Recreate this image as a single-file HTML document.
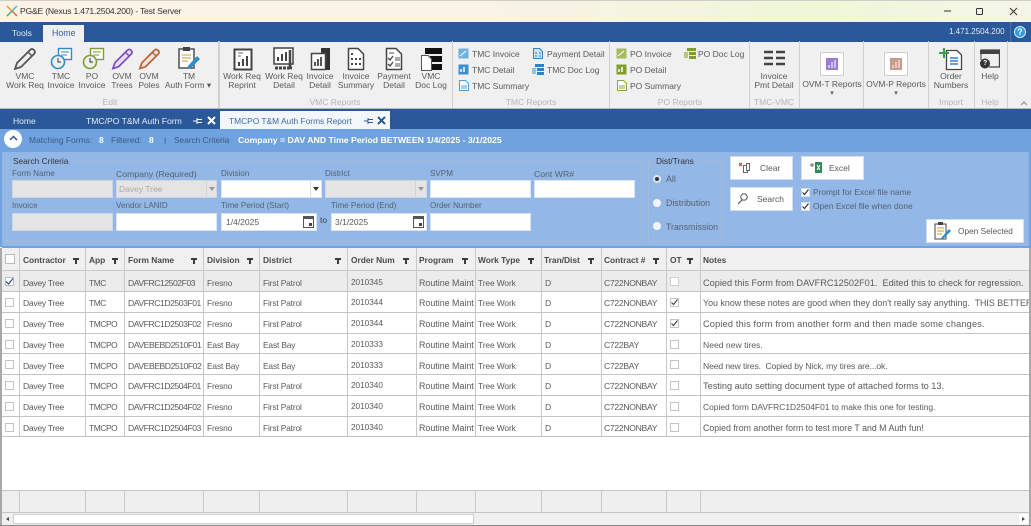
<!DOCTYPE html>
<html><head><meta charset="utf-8"><title>PG&amp;E</title>
<style>
html,body{margin:0;padding:0;width:1031px;height:526px;overflow:hidden;background:#fff}
#w{position:absolute;left:0;top:0;width:1031px;height:526px;overflow:hidden;font-family:"Liberation Sans",sans-serif;font-size:8.5px;color:#5a5a5a;filter:blur(.35px)}
#w div,#w span,#w svg{position:absolute}
.t{white-space:pre;line-height:12px;transform:translateY(-6px)}
.c{white-space:pre;line-height:12px;transform:translate(-50%,-6px);text-align:center}
.s{background:#d0d0d0;width:2px;top:41px;height:67px}
.g{color:#b4b4b4}
.lb{color:#55606e;font-size:8.1px}
.in{background:#fff;border:1px solid #dbe4f0;box-sizing:border-box;height:18px}
.dis{background:#e4e4e4;border-color:#cfd6df}
.btn{background:#fff;border:1px solid #d5deea;box-sizing:border-box}
.r{left:0;width:1031px;height:21px;background:#fff;border-bottom:1px solid #c4c4c4;box-sizing:border-box}
.cb{background:#fff;border:1px solid #c4c4c4;width:9px;height:9px;box-sizing:border-box}
.h{font-weight:bold;color:#4a4a4a;font-size:8.4px}
.f{width:6px;height:2px;background:#3c3c3c}
.f::after{content:"";position:absolute;left:2px;top:1px;width:2px;height:5px;background:#3c3c3c}
.vl{width:1px;top:248px;height:189px;background:#c8c8c8}
.vf{width:1px;top:490px;height:23px;background:#c8c8c8}
.t:not(.h)[style^="left:23px"]{font-size:8.6px;letter-spacing:-.3px}
.t:not(.h)[style^="left:89px"]{font-size:8.4px;letter-spacing:-.4px}
.t:not(.h)[style^="left:128px"]{font-size:8.6px;letter-spacing:-.45px}
.t:not(.h)[style^="left:207px"]{font-size:8.4px;letter-spacing:-.15px}
.t:not(.h)[style^="left:263px"]{font-size:8.4px;letter-spacing:-.15px}
.t:not(.h)[style^="left:351px"]{font-size:8.2px}
.t:not(.h)[style^="left:419px"]{font-size:8.9px}
.t:not(.h)[style^="left:478px"]{font-size:8.4px;letter-spacing:-.1px}
.t:not(.h)[style^="left:604px"]{font-size:8.6px;letter-spacing:-.3px}
</style></head><body><div id="w">

<!-- title bar -->
<div style="left:0;top:0;width:1031px;height:22px;background:linear-gradient(90deg,#fbf3e6 0%,#f7f3e4 55%,#eff7d8 80%,#f4f5e9 100%)"></div>
<div style="left:0;top:0;width:1031px;height:1px;background:#cfcfc8"></div>
<svg style="left:6px;top:5px" width="12" height="12" viewBox="0 0 12 12"><path d="M1 1L11 11" stroke="#e8604c" stroke-width="1.4"/><path d="M11 1L1 11" stroke="#3fb4d8" stroke-width="1.4"/><path d="M1 1L6 6" stroke="#f0a830" stroke-width="1.4"/><path d="M6 6L1 11" stroke="#58b858" stroke-width="1.4"/></svg>
<span class="t" style="left:20px;top:11px;font-size:8.6px;letter-spacing:-.2px;color:#333">PG&amp;E (Nexus 1.471.2504.200) - Test Server</span>
<svg style="left:940px;top:4px" width="91" height="15" viewBox="0 0 91 15"><path d="M4 7H11" stroke="#333"/><rect x="36.500" y="4.500" width="6" height="6" rx="1" fill="none" stroke="#333"/><path d="M70 4L77 11M77 4L70 11" stroke="#333"/></svg>

<!-- blue bar -->
<div style="left:0;top:22px;width:1031px;height:20px;background:#2a5899"></div>
<span class="t" style="left:12px;top:33px;color:#dfe8f4;font-size:8.5px">Tools</span>
<div style="left:43px;top:25px;width:41px;height:17px;background:#f0f0f0"></div>
<span class="t" style="left:52px;top:33px;color:#2f5f9f;font-size:8.8px">Home</span>
<span class="t" style="left:949px;top:32px;color:#e4ebf5;font-size:8px">1.471.2504.200</span>
<div style="left:1010px;top:22px;width:1px;height:20px;background:#4d75ad"></div>
<div style="left:1014px;top:26px;width:12px;height:12px;border-radius:50%;background:#2c9be2;border:1px solid #d7ecfa;box-sizing:border-box;color:#fff;font-weight:bold;font-size:9px;line-height:10px;text-align:center">?</div>

<!-- ribbon -->
<div style="left:0;top:42px;width:1031px;height:66px;background:#f0f0f0"></div>
<div style="left:0;top:108px;width:1031px;height:1px;background:#b9b9b9"></div>
<div class="s" style="left:218px"></div><div class="s" style="left:452px;width:1px"></div><div class="s" style="left:609px;width:1px"></div><div class="s" style="left:749px;width:1px"></div><div class="s" style="left:799px;width:1px"></div><div class="s" style="left:863px;width:1px"></div><div class="s" style="left:928px;width:1px"></div><div class="s" style="left:974px;width:1px"></div><div class="s" style="left:1007px;width:1px"></div>

<!-- pencil icons -->
<svg style="left:13px;top:47px" width="24" height="23" viewBox="0 0 24 23"><path d="M4 16L17 3Q19 1 21 3T21 7L8 20L2 22Z" fill="none" stroke="#555" stroke-width="1.8"/><path d="M15 5L19 9" stroke="#555" stroke-width="1.500"/></svg>
<svg style="left:50px;top:47px" width="23" height="24" viewBox="0 0 23 24"><rect x="8.500" y="1.500" width="13" height="11" fill="#fff" stroke="#2f8ccb" stroke-width="1.400"/><path d="M11 5H19M11 8H17" stroke="#2f8ccb"/><circle cx="8" cy="15" r="6.500" fill="#f0f0f0" stroke="#2f8ccb" stroke-width="1.600"/><path d="M8 11V15H11" fill="none" stroke="#555" stroke-width="1.200"/></svg>
<svg style="left:82px;top:47px" width="23" height="24" viewBox="0 0 23 24"><rect x="8.500" y="1.500" width="13" height="11" fill="#fff" stroke="#7f9e2d" stroke-width="1.400"/><path d="M11 5H19M11 8H17" stroke="#7f9e2d"/><circle cx="8" cy="15" r="6.500" fill="#f0f0f0" stroke="#7f9e2d" stroke-width="1.600"/><path d="M8 11V15H11" fill="none" stroke="#555" stroke-width="1.200"/></svg>
<svg style="left:111px;top:47px" width="23" height="23" viewBox="0 0 24 23"><path d="M4 16L17 3Q19 1 21 3T21 7L8 20L2 22Z" fill="#e9e0f8" stroke="#7b4cc4" stroke-width="1.800"/><path d="M15 5L19 9" stroke="#7b4cc4" stroke-width="1.500"/></svg>
<svg style="left:138px;top:47px" width="23" height="23" viewBox="0 0 24 23"><path d="M4 16L17 3Q19 1 21 3T21 7L8 20L2 22Z" fill="#f4e4da" stroke="#b8623a" stroke-width="1.800"/><path d="M15 5L19 9" stroke="#b8623a" stroke-width="1.500"/></svg>
<svg style="left:177px;top:46px" width="24" height="25" viewBox="0 0 24 25"><rect x="2" y="3" width="15" height="19" fill="#fff" stroke="#444" stroke-width="1.400"/><rect x="6" y="1" width="7" height="4" fill="#444"/><path d="M5 9H14M5 12H14M5 15H11" stroke="#d6b050" stroke-width="1.300"/><path d="M11 20L20 10L23 13L14 22L10 23Z" fill="#2f8ccb"/></svg>

<!-- report icons -->
<svg style="left:233px;top:48px" width="20" height="23" viewBox="0 0 20 23"><rect x="1.500" y="1.500" width="17" height="20" fill="#fff" stroke="#444" stroke-width="2"/><path d="M5 5H10M5 8H8" stroke="#666"/><path d="M6 18V14M10 18V11M14 18V8" stroke="#444" stroke-width="2"/></svg>
<svg style="left:273px;top:47px" width="21" height="24" viewBox="0 0 21 24"><rect x="1" y="1" width="19" height="16" fill="#fff" stroke="#444" stroke-width="1.500"/><path d="M5 14V10M9 14V7M13 14V5" stroke="#444" stroke-width="2"/><path d="M2 21H19" stroke="#444" stroke-width="3" stroke-dasharray="3 1"/><path d="M17 3V22" stroke="#444" stroke-width="2.500"/></svg>
<svg style="left:310px;top:47px" width="21" height="24" viewBox="0 0 21 24"><rect x="11" y="1" width="9" height="22" fill="#333"/><rect x="1.500" y="6.500" width="14" height="16" fill="#fff" stroke="#444" stroke-width="1.500"/><path d="M5 19V15M8 19V12M11 19V10" stroke="#444" stroke-width="1.800"/></svg>
<svg style="left:347px;top:47px" width="18" height="24" viewBox="0 0 18 24"><path d="M1.500 1.500H11L16.500 7V22.500H1.500Z" fill="#fff" stroke="#444" stroke-width="1.500"/><path d="M4 11h2v2H4zM8 11h2v2H8zM4 16h2v2H4zM8 16h2v2H8zM12 16h2v2h-2zM12 11h2v2h-2zM4 6h2v2H4z" fill="#444"/></svg>
<svg style="left:385px;top:47px" width="18" height="24" viewBox="0 0 18 24"><path d="M1.500 1.500H11L16.500 7V22.500H1.500Z" fill="#fff" stroke="#444" stroke-width="1.500"/><path d="M3 11L5 13L8 9M3 17L5 19L8 15" fill="none" stroke="#444" stroke-width="1.300"/><path d="M10 11H15M10 13H15M10 17H15M10 19H15M4 6H9" stroke="#555"/></svg>
<svg style="left:420px;top:47px" width="22" height="24" viewBox="0 0 22 24"><rect x="5" y="1" width="17" height="6" fill="#111"/><rect x="10" y="9" width="12" height="6" fill="#111"/><rect x="10" y="17" width="12" height="6" fill="#111"/><path d="M1.500 8.500H8L11.500 12V23.500H1.500Z" fill="#fff" stroke="#555"/></svg>

<!-- small icons -->
<svg style="left:458px;top:48px" width="11" height="11" viewBox="0 0 11 11"><rect width="10" height="10" x=".5" y=".5" fill="#6fb0e0"/><path d="M2 8L8 3" stroke="#fff"/></svg>
<svg style="left:458px;top:64px" width="11" height="11" viewBox="0 0 11 11"><rect width="10" height="10" x=".5" y=".5" fill="#3c8fd0"/><path d="M3 8V5M6 8V3" stroke="#fff" stroke-width="1.500"/></svg>
<svg style="left:459px;top:80px" width="10" height="11" viewBox="0 0 10 11"><path d="M.5 .5H6.500L9.500 3.500V10.500H.5Z" fill="#fff" stroke="#4d9dd8"/><path d="M2 6H8M2 8H8" stroke="#4d9dd8"/></svg>
<svg style="left:533px;top:48px" width="10" height="11" viewBox="0 0 10 11"><path d="M.5 .5H6.500L9.500 3.500V10.500H.5Z" fill="#cfe3f4" stroke="#2f82c4"/><path d="M2 5H4M6 5H8M2 8H4M6 8H8" stroke="#2f82c4"/></svg>
<svg style="left:532px;top:64px" width="12" height="11" viewBox="0 0 12 11"><rect x="3" y="0" width="9" height="3" fill="#2f82c4"/><rect x="5" y="4" width="7" height="3" fill="#2f82c4"/><rect x="5" y="8" width="7" height="3" fill="#2f82c4"/><rect x="0" y="4" width="4" height="6" fill="#8fc0e6"/></svg>
<svg style="left:616px;top:48px" width="11" height="11" viewBox="0 0 11 11"><rect width="10" height="10" x=".5" y=".5" fill="#a4bb5f"/><path d="M2 8L8 3" stroke="#fff"/></svg>
<svg style="left:616px;top:64px" width="11" height="11" viewBox="0 0 11 11"><rect width="10" height="10" x=".5" y=".5" fill="#7f9e2d"/><path d="M3 8V5M6 8V3" stroke="#fff" stroke-width="1.500"/></svg>
<svg style="left:617px;top:80px" width="10" height="11" viewBox="0 0 10 11"><path d="M.5 .5H6.500L9.500 3.500V10.500H.5Z" fill="#fff" stroke="#8aa83a"/><path d="M2 6H8M2 8H8" stroke="#8aa83a"/></svg>
<svg style="left:684px;top:48px" width="12" height="11" viewBox="0 0 12 11"><rect x="3" y="0" width="9" height="3" fill="#7f9e2d"/><rect x="5" y="4" width="7" height="3" fill="#7f9e2d"/><rect x="5" y="8" width="7" height="3" fill="#7f9e2d"/><rect x="0" y="4" width="4" height="6" fill="#b4c97e"/></svg>

<svg style="left:764px;top:50px" width="21" height="16" viewBox="0 0 21 16"><path d="M0 2H9M12 2H21M0 8H9M12 8H21M0 14H9M12 14H21" stroke="#444" stroke-width="2.400"/></svg>
<div class="btn" style="left:820px;top:52px;width:24px;height:24px;border-color:#cfcfcf"></div>
<svg style="left:826px;top:58px" width="12" height="12" viewBox="0 0 12 12"><rect width="12" height="12" fill="#9d79d8"/><path d="M3 10V7M6 10V4M9 10V2" stroke="#e8def8" stroke-width="1.400"/></svg>
<div class="btn" style="left:884px;top:52px;width:24px;height:24px;border-color:#cfcfcf"></div>
<svg style="left:890px;top:58px" width="12" height="12" viewBox="0 0 12 12"><rect width="12" height="12" fill="#c99a8a"/><path d="M3 10V7M6 10V4M9 10V2" stroke="#f2e2dc" stroke-width="1.400"/></svg>
<svg style="left:938px;top:47px" width="25" height="24" viewBox="0 0 25 24"><path d="M8.500 3.500H19L23.500 8V22.500H8.500Z" fill="#fff" stroke="#444" stroke-width="1.300"/><path d="M12 11H20M12 14H20M12 17H20" stroke="#2f7fd8" stroke-width="1.600"/><path d="M1 6H11M6 1V11" stroke="#3aa04c" stroke-width="2"/></svg>
<svg style="left:980px;top:49px" width="20" height="20" viewBox="0 0 20 20"><path d="M.5 1H19.500V18H9" fill="none" stroke="#444" stroke-width="1.300"/><path d="M0 1H20V5H0Z" fill="#444"/><path d="M1 5V11" stroke="#444"/><circle cx="5" cy="14.500" r="5" fill="#333"/></svg>
<span class="t" style="left:983px;top:64px;color:#fff;font-size:7px;font-weight:bold">?</span>

<!-- ribbon labels -->
<span class="c" style="left:25px;top:76px">VMC</span><span class="c" style="left:25px;top:85px">Work Req</span>
<span class="c" style="left:61px;top:76px">TMC</span><span class="c" style="left:61px;top:85px">Invoice</span>
<span class="c" style="left:92px;top:76px">PO</span><span class="c" style="left:92px;top:85px">Invoice</span>
<span class="c" style="left:122px;top:76px">OVM</span><span class="c" style="left:122px;top:85px">Trees</span>
<span class="c" style="left:149px;top:76px">OVM</span><span class="c" style="left:149px;top:85px">Poles</span>
<span class="c" style="left:189px;top:76px">TM</span><span class="c" style="left:188px;top:85px">Auth Form ▾</span>
<span class="c" style="left:242px;top:76px">Work Req</span><span class="c" style="left:242px;top:85px">Reprint</span>
<span class="c" style="left:284px;top:76px">Work Req</span><span class="c" style="left:284px;top:85px">Detail</span>
<span class="c" style="left:320px;top:76px">Invoice</span><span class="c" style="left:320px;top:85px">Detail</span>
<span class="c" style="left:356px;top:76px">Invoice</span><span class="c" style="left:356px;top:85px">Summary</span>
<span class="c" style="left:394px;top:76px">Payment</span><span class="c" style="left:394px;top:85px">Detail</span>
<span class="c" style="left:431px;top:76px">VMC</span><span class="c" style="left:431px;top:85px">Doc Log</span>
<span class="c" style="left:774px;top:76px">Invoice</span><span class="c" style="left:774px;top:85px">Pmt Detail</span>
<span class="c" style="left:832px;top:84px">OVM-T Reports</span><span class="c" style="left:832px;top:94px;font-size:7px">▾</span>
<span class="c" style="left:896px;top:84px">OVM-P Reports</span><span class="c" style="left:896px;top:94px;font-size:7px">▾</span>
<span class="c" style="left:951px;top:76px">Order</span><span class="c" style="left:951px;top:85px">Numbers</span>
<span class="c" style="left:990px;top:76px">Help</span>
<span class="t" style="left:472px;top:54px">TMC Invoice</span><span class="t" style="left:472px;top:70px">TMC Detail</span><span class="t" style="left:472px;top:86px">TMC Summary</span>
<span class="t" style="left:547px;top:54px">Payment Detail</span><span class="t" style="left:547px;top:70px">TMC Doc Log</span>
<span class="t" style="left:630px;top:54px">PO Invoice</span><span class="t" style="left:630px;top:70px">PO Detail</span><span class="t" style="left:630px;top:86px">PO Summary</span>
<span class="t" style="left:698px;top:54px">PO Doc Log</span>
<span class="c g" style="left:110px;top:102px">Edit</span><span class="c g" style="left:335px;top:102px">VMC Reports</span><span class="c g" style="left:531px;top:102px">TMC Reports</span><span class="c g" style="left:680px;top:102px">PO Reports</span><span class="c g" style="left:774px;top:102px">TMC-VMC</span><span class="c g" style="left:951px;top:102px">Import</span><span class="c g" style="left:990px;top:102px">Help</span>
<svg style="left:1020px;top:100px" width="8" height="6" viewBox="0 0 8 6"><path d="M1 5L4 2L7 5" fill="none" stroke="#888"/></svg>

<!-- tab bar -->
<div style="left:0;top:109px;width:1031px;height:20px;background:#2a5899"></div>
<span class="t" style="left:13px;top:121px;color:#e6edf6">Home</span>
<span class="t" style="left:86px;top:121px;color:#e6edf6;font-size:8.6px">TMC/PO T&amp;M Auth Form</span>
<svg style="left:193px;top:116px" width="10" height="10" viewBox="0 0 10 10"><path d="M0 5H4M4 3.500H9M4 6.500H9M4 2V8" fill="none" stroke="#fff"/></svg>
<svg style="left:207px;top:116px" width="9" height="9" viewBox="0 0 9 9"><path d="M1 1L8 8M8 1L1 8" stroke="#fff" stroke-width="2"/></svg>
<div style="left:220px;top:111px;width:170px;height:18px;background:#f3f6fa"></div>
<span class="t" style="left:229px;top:121px;color:#3d6aa5;font-size:8.4px">TMCPO T&amp;M Auth Forms Report</span>
<svg style="left:364px;top:116px" width="10" height="10" viewBox="0 0 10 10"><path d="M0 5H4M4 3.500H9M4 6.500H9M4 2V8" fill="none" stroke="#2a5899"/></svg>
<svg style="left:377px;top:116px" width="9" height="9" viewBox="0 0 9 9"><path d="M1 1L8 8M8 1L1 8" stroke="#2a5899" stroke-width="2"/></svg>

<!-- summary strip -->
<div style="left:0;top:129px;width:1031px;height:23px;background:#6fa2de"></div>
<div style="left:4px;top:130px;width:18px;height:18px;border-radius:50%;background:#fff"></div>
<svg style="left:9px;top:135px" width="9" height="6" viewBox="0 0 9 6"><path d="M1 5L4.500 1.500L8 5" fill="none" stroke="#2a5899" stroke-width="1.500"/></svg>
<span class="t" style="left:29px;top:140px;color:#3d5a80">Matching Forms:</span>
<span class="t" style="left:99px;top:140px;color:#fff;font-weight:bold">8</span>
<span class="t" style="left:111px;top:140px;color:#3d5a80">Filtered:</span>
<span class="t" style="left:149px;top:140px;color:#fff;font-weight:bold">8</span>
<span class="t" style="left:164px;top:140px;color:#3d5a80">|</span>
<span class="t" style="left:174px;top:140px;color:#3d5a80;font-size:8.3px">Search Criteria</span>
<span class="t" style="left:238px;top:140px;color:#fff;font-weight:bold;font-size:8.7px">Company = DAV AND Time Period BETWEEN 1/4/2025 - 3/1/2025</span>

<!-- search panel -->
<div style="left:2px;top:152px;width:1027px;height:94px;background:#93b8e8"></div>
<div style="left:0;top:129px;width:2px;height:118px;background:#6fa2de"></div>
<div style="left:2px;top:246px;width:1029px;height:2px;background:#6fa2de"></div>
<div style="left:1029px;top:152px;width:2px;height:96px;background:#6fa2de"></div>
<div style="left:6px;top:161px;width:636px;height:81px;border:1px solid #a9b9cf;box-sizing:border-box"></div>
<div style="left:11px;top:158px;width:62px;height:6px;background:#93b8e8"></div>
<span class="t" style="left:13px;top:161px;color:#333;font-size:8.3px">Search Criteria</span>
<div style="left:648px;top:161px;width:74px;height:81px;border:1px solid #a9b9cf;box-sizing:border-box"></div>
<div style="left:654px;top:158px;width:44px;height:6px;background:#93b8e8"></div>
<span class="t" style="left:656px;top:161px;color:#333;font-size:8.4px">Dist/Trans</span>

<span class="t lb" style="left:12px;top:174px">Form Name</span><span class="t lb" style="left:116px;top:174px;font-size:8.7px">Company (Required)</span><span class="t lb" style="left:221px;top:174px">Division</span><span class="t lb" style="left:325px;top:174px">District</span><span class="t lb" style="left:430px;top:174px">SVPM</span><span class="t lb" style="left:534px;top:174px;font-size:8.7px">Cont WR#</span>
<div class="in dis" style="left:12px;top:180px;width:101px"></div>
<div class="in dis" style="left:116px;top:180px;width:101px"></div>
<div style="left:206px;top:181px;width:1px;height:16px;background:#d4d4d4"></div>
<span class="t" style="left:119px;top:189px;color:#aaa">Davey Tree</span>
<svg style="left:209px;top:187px" width="6" height="4" viewBox="0 0 6 4"><path d="M0 0H6L3 4Z" fill="#999"/></svg>
<div class="in" style="left:221px;top:180px;width:101px"></div>
<div style="left:310px;top:181px;width:1px;height:16px;background:#ddd"></div>
<svg style="left:313px;top:187px" width="6" height="4" viewBox="0 0 6 4"><path d="M0 0H6L3 4Z" fill="#333"/></svg>
<div class="in dis" style="left:325px;top:180px;width:102px"></div>
<div style="left:415px;top:181px;width:1px;height:16px;background:#d4d4d4"></div>
<svg style="left:418px;top:187px" width="6" height="4" viewBox="0 0 6 4"><path d="M0 0H6L3 4Z" fill="#999"/></svg>
<div class="in" style="left:430px;top:180px;width:101px"></div>
<div class="in" style="left:534px;top:180px;width:101px"></div>

<span class="t lb" style="left:12px;top:206px">Invoice</span><span class="t lb" style="left:116px;top:206px">Vendor LANID</span><span class="t lb" style="left:221px;top:206px">Time Period (Start)</span><span class="t lb" style="left:331px;top:206px">Time Period (End)</span><span class="t lb" style="left:430px;top:206px">Order Number</span>
<div class="in dis" style="left:12px;top:213px;width:101px"></div>
<div class="in" style="left:116px;top:213px;width:101px"></div>
<div class="in" style="left:221px;top:213px;width:96px"></div>
<span class="t" style="left:226px;top:222px">1/4/2025</span>
<svg style="left:303px;top:215px" width="11" height="13" viewBox="0 0 11 13"><rect x=".5" y="1.500" width="10" height="11" fill="#fff" stroke="#555"/><path d="M0 3H11" stroke="#555" stroke-width="2"/><rect x="6" y="8" width="3" height="3" fill="#444"/></svg>
<span class="t" style="left:320px;top:220px;color:#444">to</span>
<div class="in" style="left:331px;top:213px;width:96px"></div>
<span class="t" style="left:335px;top:222px">3/1/2025</span>
<svg style="left:413px;top:215px" width="11" height="13" viewBox="0 0 11 13"><rect x=".5" y="1.500" width="10" height="11" fill="#fff" stroke="#555"/><path d="M0 3H11" stroke="#555" stroke-width="2"/><rect x="6" y="8" width="3" height="3" fill="#444"/></svg>
<div class="in" style="left:430px;top:213px;width:101px"></div>

<!-- radios -->
<div style="left:653px;top:175px;width:8px;height:8px;border-radius:50%;background:#dde6f2"></div><div style="left:655px;top:177px;width:4px;height:4px;border-radius:50%;background:#333"></div>
<div style="left:653px;top:199px;width:8px;height:8px;border-radius:50%;background:#f2f5fa"></div>
<div style="left:653px;top:222px;width:8px;height:8px;border-radius:50%;background:#f2f5fa"></div>
<span class="t lb" style="left:666px;top:179px;font-size:8.8px">All</span><span class="t lb" style="left:666px;top:203px;font-size:8.8px">Distribution</span><span class="t lb" style="left:666px;top:227px;font-size:8.8px">Transmission</span>

<!-- buttons -->
<div class="btn" style="left:730px;top:156px;width:63px;height:24px"></div>
<svg style="left:739px;top:162px" width="12" height="12" viewBox="0 0 12 12"><rect x="4.500" y="3.500" width="4" height="7" fill="#fff" stroke="#666"/><rect x="7.500" y="1.500" width="3" height="7" fill="#fff" stroke="#666"/><path d="M0 1L3 4M3 1L0 4" stroke="#d33" stroke-width="1.200"/></svg>
<span class="t" style="left:760px;top:168px">Clear</span>
<div class="btn" style="left:801px;top:156px;width:63px;height:24px"></div>
<svg style="left:810px;top:162px" width="12" height="11" viewBox="0 0 12 11"><rect x="5" y="0" width="7" height="11" fill="#2e8b57"/><path d="M7 3L10 8M10 3L7 8" stroke="#fff"/><path d="M0 3H4M2 1V5" stroke="#666"/></svg>
<span class="t" style="left:829px;top:168px">Excel</span>
<div class="btn" style="left:730px;top:187px;width:63px;height:24px"></div>
<svg style="left:737px;top:193px" width="11" height="12" viewBox="0 0 11 12"><circle cx="7" cy="4" r="3.200" fill="none" stroke="#555"/><path d="M5 7L1 11" stroke="#555" stroke-width="1.200"/></svg>
<span class="t" style="left:757px;top:199px">Search</span>
<div class="cb" style="left:801px;top:188px;border-color:#d5deea"></div>
<div class="cb" style="left:801px;top:202px;border-color:#d5deea"></div>
<svg style="left:801px;top:188px" width="9" height="9" viewBox="0 0 9 9"><path d="M1.500 4.500L3.500 6.500L7.500 1.500" fill="none" stroke="#333" stroke-width="1.200"/></svg>
<svg style="left:801px;top:202px" width="9" height="9" viewBox="0 0 9 9"><path d="M1.500 4.500L3.500 6.500L7.500 1.500" fill="none" stroke="#333" stroke-width="1.200"/></svg>
<span class="t lb" style="left:813px;top:192px;font-size:8.4px">Prompt for Excel file name</span>
<span class="t lb" style="left:813px;top:206px;font-size:8.4px">Open Excel file when done</span>
<div class="btn" style="left:926px;top:219px;width:98px;height:24px"></div>
<svg style="left:934px;top:221px" width="18" height="20" viewBox="0 0 18 20"><rect x="1" y="3" width="11" height="15" fill="#fff" stroke="#444"/><rect x="4" y="1" width="5" height="3" fill="#444"/><path d="M3 7H10M3 10H10M3 13H8" stroke="#d6b050" stroke-width="1.200"/><path d="M8 16L15 8L17 10L10 17L7 18Z" fill="#2f8ccb"/></svg>
<span class="t" style="left:958px;top:231px;font-size:8.3px">Open Selected</span>

<!-- table header -->
<div style="left:2px;top:248px;width:1027px;height:23px;background:#f0f0f0;border-bottom:1px solid #c8c8c8;box-sizing:border-box"></div>
<div class="cb" style="left:5px;top:254px;width:10px;height:10px;border-color:#bbb"></div>
<span class="t h" style="left:23px;top:260px">Contractor</span><div class="f" style="left:73px;top:258px"></div>
<span class="t h" style="left:89px;top:260px">App</span><div class="f" style="left:112px;top:258px"></div>
<span class="t h" style="left:128px;top:260px">Form Name</span><div class="f" style="left:191px;top:258px"></div>
<span class="t h" style="left:207px;top:260px">Division</span><div class="f" style="left:247px;top:258px"></div>
<span class="t h" style="left:263px;top:260px">District</span><div class="f" style="left:335px;top:258px"></div>
<span class="t h" style="left:351px;top:260px">Order Num</span><div class="f" style="left:403px;top:258px"></div>
<span class="t h" style="left:419px;top:260px">Program</span><div class="f" style="left:462px;top:258px"></div>
<span class="t h" style="left:478px;top:260px">Work Type</span><div class="f" style="left:528px;top:258px"></div>
<span class="t h" style="left:544px;top:260px">Tran/Dist</span><div class="f" style="left:588px;top:258px"></div>
<span class="t h" style="left:604px;top:260px">Contract #</span><div class="f" style="left:653px;top:258px"></div>
<span class="t h" style="left:670px;top:260px">OT</span><div class="f" style="left:687px;top:258px"></div>
<span class="t h" style="left:703px;top:260px">Notes</span>

<!-- rows -->
<div class="r" style="top:271px;background:#ececec"></div>
<div class="r" style="top:292px"></div>
<div class="r" style="top:313px"></div>
<div class="r" style="top:334px;height:20px"></div>
<div class="r" style="top:354px"></div>
<div class="r" style="top:375px"></div>
<div class="r" style="top:396px"></div>
<div class="r" style="top:417px;height:20px"></div>
<div style="left:0;top:248px;width:2px;height:278px;background:#a8a8a8"></div>
<div style="left:1029px;top:248px;width:2px;height:278px;background:#aaa"></div>

<div class="cb" style="left:5px;top:277px;border-color:#bbb"></div><svg style="left:5px;top:277px" width="9" height="9" viewBox="0 0 9 9"><path d="M1 4.500L3.500 7L8 1.500" fill="none" stroke="#2d4d78" stroke-width="1.200"/></svg>
<span class="t" style="left:23px;top:283px">Davey Tree</span><span class="t" style="left:89px;top:283px">TMC</span><span class="t" style="left:128px;top:283px">DAVFRC12502F03</span><span class="t" style="left:207px;top:283px">Fresno</span><span class="t" style="left:263px;top:283px">First Patrol</span><span class="t" style="left:351px;top:283px">2010345</span><span class="t" style="left:419px;top:283px">Routine Maint</span><span class="t" style="left:478px;top:283px">Tree Work</span><span class="t" style="left:545px;top:283px">D</span><span class="t" style="left:604px;top:283px">C722NONBAY</span><div class="cb" style="left:670px;top:277px;border-color:#d0d0d0"></div><span class="t" style="left:703px;top:283px;font-size:9.2px">Copied this Form from DAVFRC12502F01.  Edited this to check for regression.</span>

<div class="cb" style="left:5px;top:298px"></div>
<span class="t" style="left:23px;top:303px">Davey Tree</span><span class="t" style="left:89px;top:303px">TMC</span><span class="t" style="left:128px;top:303px">DAVFRC1D2503F01</span><span class="t" style="left:207px;top:303px">Fresno</span><span class="t" style="left:263px;top:303px">First Patrol</span><span class="t" style="left:351px;top:303px">2010344</span><span class="t" style="left:419px;top:303px">Routine Maint</span><span class="t" style="left:478px;top:303px">Tree Work</span><span class="t" style="left:545px;top:303px">D</span><span class="t" style="left:604px;top:303px">C722NONBAY</span><div class="cb" style="left:670px;top:298px"></div><svg style="left:670px;top:298px" width="9" height="9" viewBox="0 0 9 9"><path d="M1.500 4.500L3.500 6.500L7.500 1.500" fill="none" stroke="#444" stroke-width="1.100"/></svg><div style="left:703px;top:292px;width:326px;height:19px;overflow:hidden"><span class="t" style="left:0;top:11px;font-size:8.9px">You know these notes are good when they don't really say anything.  THIS BETTER HAVE</span></div>

<div class="cb" style="left:5px;top:319px"></div>
<span class="t" style="left:23px;top:324px">Davey Tree</span><span class="t" style="left:89px;top:324px">TMCPO</span><span class="t" style="left:128px;top:324px">DAVFRC1D2503F02</span><span class="t" style="left:207px;top:324px">Fresno</span><span class="t" style="left:263px;top:324px">First Patrol</span><span class="t" style="left:351px;top:324px">2010344</span><span class="t" style="left:419px;top:324px">Routine Maint</span><span class="t" style="left:478px;top:324px">Tree Work</span><span class="t" style="left:545px;top:324px">D</span><span class="t" style="left:604px;top:324px">C722NONBAY</span><div class="cb" style="left:670px;top:319px"></div><svg style="left:670px;top:319px" width="9" height="9" viewBox="0 0 9 9"><path d="M1.500 4.500L3.500 6.500L7.500 1.500" fill="none" stroke="#444" stroke-width="1.100"/></svg><span class="t" style="left:703px;top:324px;font-size:9.2px;letter-spacing:.17px">Copied this form from another form and then made some changes.</span>

<div class="cb" style="left:5px;top:340px"></div>
<span class="t" style="left:23px;top:345px">Davey Tree</span><span class="t" style="left:89px;top:345px">TMCPO</span><span class="t" style="left:128px;top:345px">DAVEBEBD2510F01</span><span class="t" style="left:207px;top:345px">East Bay</span><span class="t" style="left:263px;top:345px">East Bay</span><span class="t" style="left:351px;top:345px">2010333</span><span class="t" style="left:419px;top:345px">Routine Maint</span><span class="t" style="left:478px;top:345px">Tree Work</span><span class="t" style="left:545px;top:345px">D</span><span class="t" style="left:604px;top:345px">C722BAY</span><div class="cb" style="left:670px;top:340px"></div><span class="t" style="left:703px;top:345px;font-size:8.6px">Need new tires.</span>

<div class="cb" style="left:5px;top:360px"></div>
<span class="t" style="left:23px;top:366px">Davey Tree</span><span class="t" style="left:89px;top:366px">TMCPO</span><span class="t" style="left:128px;top:366px">DAVEBEBD2510F02</span><span class="t" style="left:207px;top:366px">East Bay</span><span class="t" style="left:263px;top:366px">East Bay</span><span class="t" style="left:351px;top:366px">2010333</span><span class="t" style="left:419px;top:366px">Routine Maint</span><span class="t" style="left:478px;top:366px">Tree Work</span><span class="t" style="left:545px;top:366px">D</span><span class="t" style="left:604px;top:366px">C722BAY</span><div class="cb" style="left:670px;top:360px"></div><span class="t" style="left:703px;top:366px;font-size:8.6px;letter-spacing:-.12px">Need new tires.  Copied by Nick, my tires are...ok.</span>

<div class="cb" style="left:5px;top:381px"></div>
<span class="t" style="left:23px;top:386px">Davey Tree</span><span class="t" style="left:89px;top:386px">TMCPO</span><span class="t" style="left:128px;top:386px">DAVFRC1D2504F01</span><span class="t" style="left:207px;top:386px">Fresno</span><span class="t" style="left:263px;top:386px">First Patrol</span><span class="t" style="left:351px;top:386px">2010340</span><span class="t" style="left:419px;top:386px">Routine Maint</span><span class="t" style="left:478px;top:386px">Tree Work</span><span class="t" style="left:545px;top:386px">D</span><span class="t" style="left:604px;top:386px">C722NONBAY</span><div class="cb" style="left:670px;top:381px"></div><span class="t" style="left:703px;top:386px;font-size:9.2px">Testing auto setting document type of attached forms to 13.</span>

<div class="cb" style="left:5px;top:402px"></div>
<span class="t" style="left:23px;top:407px">Davey Tree</span><span class="t" style="left:89px;top:407px">TMCPO</span><span class="t" style="left:128px;top:407px">DAVFRC1D2504F02</span><span class="t" style="left:207px;top:407px">Fresno</span><span class="t" style="left:263px;top:407px">First Patrol</span><span class="t" style="left:351px;top:407px">2010340</span><span class="t" style="left:419px;top:407px">Routine Maint</span><span class="t" style="left:478px;top:407px">Tree Work</span><span class="t" style="left:545px;top:407px">D</span><span class="t" style="left:604px;top:407px">C722NONBAY</span><div class="cb" style="left:670px;top:402px"></div><span class="t" style="left:703px;top:407px;font-size:8.45px">Copied form DAVFRC1D2504F01 to make this one for testing.</span>

<div class="cb" style="left:5px;top:423px"></div>
<span class="t" style="left:23px;top:428px">Davey Tree</span><span class="t" style="left:89px;top:428px">TMCPO</span><span class="t" style="left:128px;top:428px">DAVFRC1D2504F03</span><span class="t" style="left:207px;top:428px">Fresno</span><span class="t" style="left:263px;top:428px">First Patrol</span><span class="t" style="left:351px;top:428px">2010340</span><span class="t" style="left:419px;top:428px">Routine Maint</span><span class="t" style="left:478px;top:428px">Tree Work</span><span class="t" style="left:545px;top:428px">D</span><span class="t" style="left:604px;top:428px">C722NONBAY</span><div class="cb" style="left:670px;top:423px"></div><span class="t" style="left:703px;top:428px;font-size:8.8px">Copied from another form to test more T and M Auth fun!</span>

<!-- vertical grid lines -->
<div class="vl" style="left:19px"></div><div class="vl" style="left:85px"></div><div class="vl" style="left:124px"></div><div class="vl" style="left:203px"></div><div class="vl" style="left:259px"></div><div class="vl" style="left:347px"></div><div class="vl" style="left:416px"></div><div class="vl" style="left:475px"></div><div class="vl" style="left:541px"></div><div class="vl" style="left:601px"></div><div class="vl" style="left:666px"></div><div class="vl" style="left:700px"></div>

<!-- footer -->
<div style="left:2px;top:490px;width:1027px;height:23px;background:#efefef;border-top:1px solid #c4c4c4;border-bottom:1px solid #c4c4c4;box-sizing:border-box"></div>
<div class="vf" style="left:19px"></div><div class="vf" style="left:85px"></div><div class="vf" style="left:124px"></div><div class="vf" style="left:203px"></div><div class="vf" style="left:259px"></div><div class="vf" style="left:347px"></div><div class="vf" style="left:416px"></div><div class="vf" style="left:475px"></div><div class="vf" style="left:541px"></div><div class="vf" style="left:601px"></div><div class="vf" style="left:666px"></div><div class="vf" style="left:700px"></div>

<!-- scrollbar -->
<div style="left:2px;top:513px;width:1027px;height:12px;background:#f0f0f0"></div>
<div style="left:13px;top:514px;width:461px;height:10px;background:#fff;border:1px solid #d0d0d0;box-sizing:border-box"></div>
<div style="left:6px;top:517px;width:0;height:0;border-top:2.500px solid transparent;border-bottom:2.500px solid transparent;border-right:3px solid #444"></div>
<div style="left:1019px;top:514px;width:9px;height:10px;background:#fff"></div>
<div style="left:1022px;top:517px;width:0;height:0;border-top:2.500px solid transparent;border-bottom:2.500px solid transparent;border-left:3px solid #444"></div>
<div style="left:0;top:525px;width:1031px;height:1px;background:#888"></div>
</div></body></html>
